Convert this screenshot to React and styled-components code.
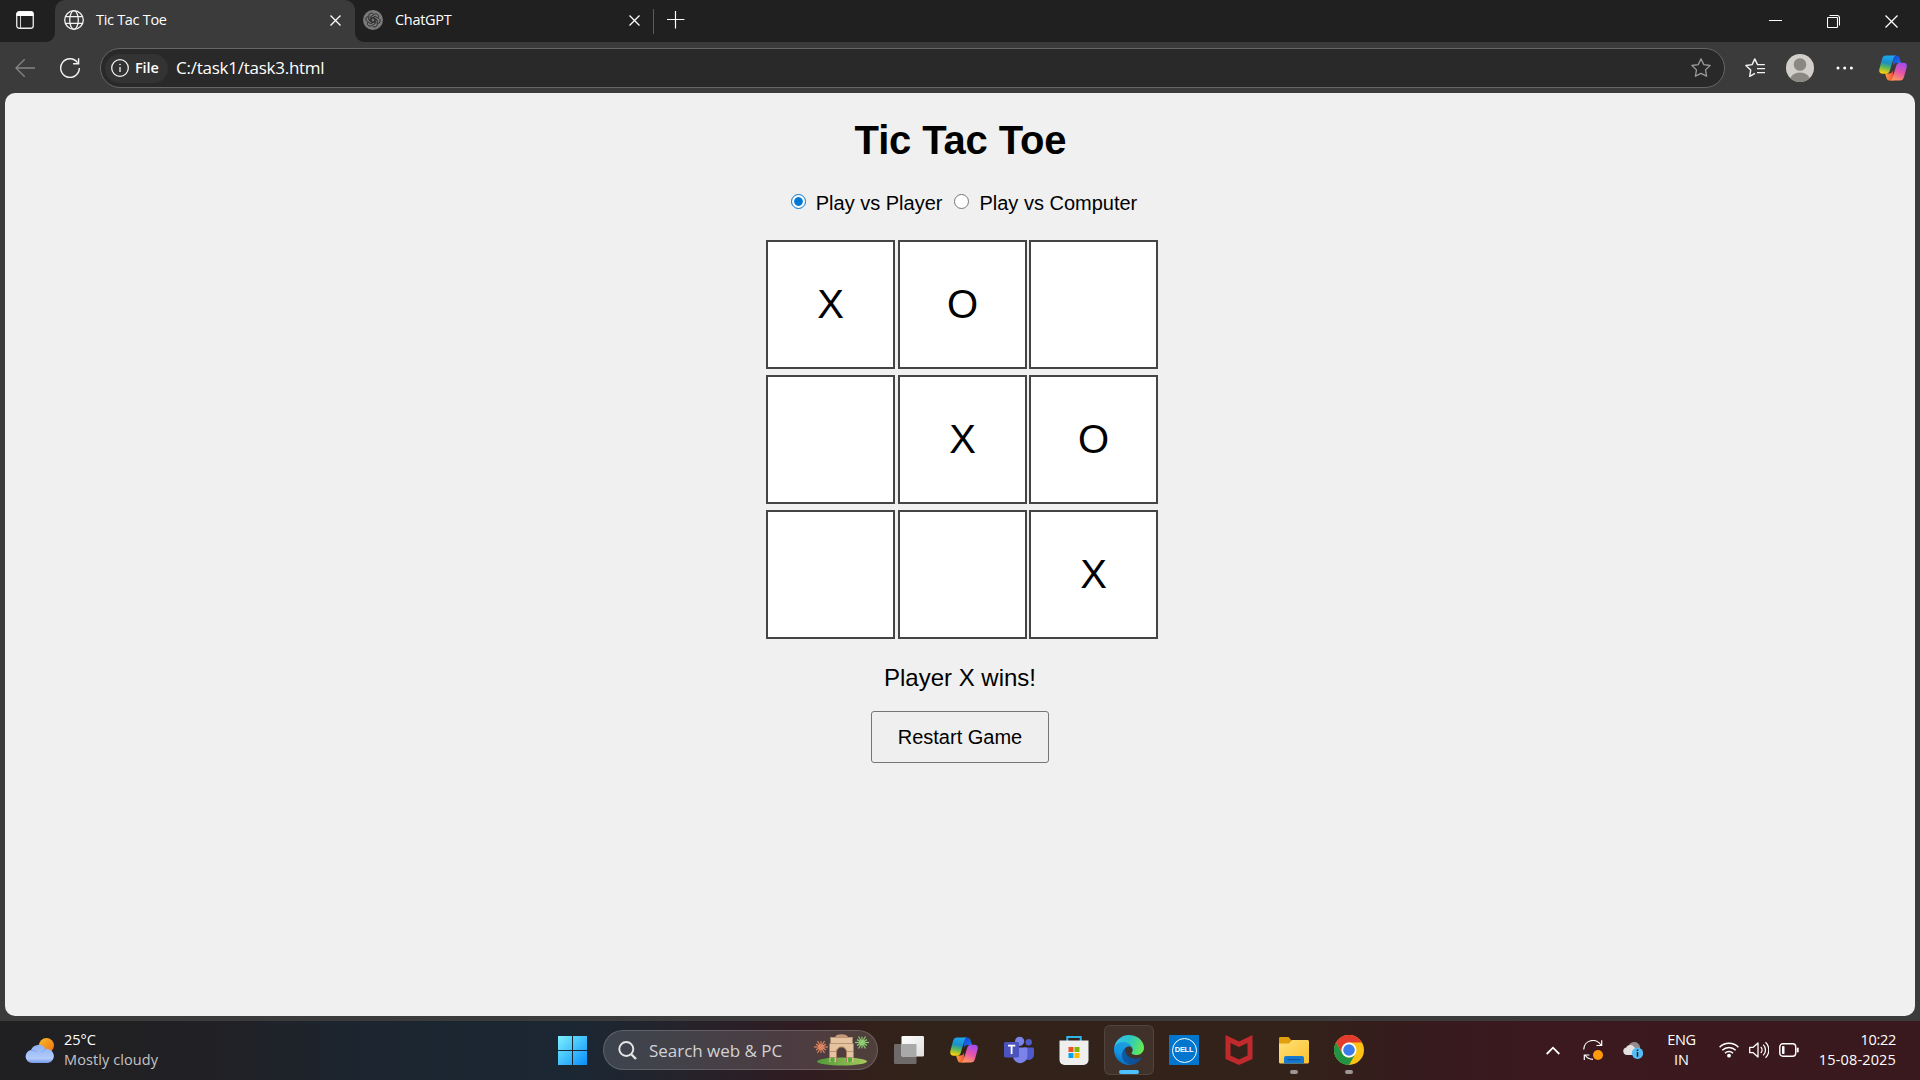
import React from "react";
import styled, { createGlobalStyle } from "styled-components";

const ui = `"Open Sans", "Noto Sans", sans-serif`;

const Global = createGlobalStyle`
  * { box-sizing: border-box; }
  html, body { margin: 0; padding: 0; background: #3b3b3b; }
  body { width: 1920px; height: 1080px; overflow: hidden; }
  svg { display: block; flex: none; }
`;

const Screen = styled.div`
  width: 1920px;
  height: 1080px;
  display: flex;
  flex-direction: column;
  background: #3b3b3b;
  font-family: ${ui};
`;

/* ---------- tab strip ---------- */
const TabStrip = styled.div`
  height: 43px;
  display: flex;
  background: #3b3b3b;
`;
const StripStart = styled.div`
  width: 55px;
  height: 42px;
  padding: 11px 0 0 16px;
  background: #202020;
  border-bottom-right-radius: 9px;
`;
const TabBack = styled.div`
  width: 300px;
  background: linear-gradient(#202020 20px, #3b3b3b 20px);
`;
const ActiveTab = styled.div`
  height: 43px;
  padding: 0 14px 3px 9px;
  display: flex;
  align-items: center;
  background: #3b3b3b;
  border-radius: 10px 10px 0 0;
`;
const StripRest = styled.div`
  flex: 1;
  height: 42px;
  display: flex;
  background: #202020;
  border-bottom-left-radius: 9px;
`;
const IdleTab = styled.div`
  width: 298px;
  height: 40px;
  padding: 0 13px 0 8px;
  display: flex;
  align-items: center;
`;
const TabTitle = styled.span`
  flex: 1;
  margin-left: 12px;
  color: #fff;
  font-size: 14.5px;
  line-height: 20px;
  letter-spacing: -0.3px;
  white-space: nowrap;
`;
const TabClose = styled.div`
  padding-top: 1px;
`;
const TabDivider = styled.div`
  width: 1px;
  height: 25px;
  margin-top: 9px;
  background: #5c5c5c;
`;
const NewTab = styled.div`
  flex: 1;
  padding: 11px 0 0 13px;
`;
const WindowButtons = styled.div`
  display: flex;
  gap: 45px;
  padding: 15px 22px 0 0;
`;

/* ---------- toolbar ---------- */
const Toolbar = styled.div`
  height: 50px;
  padding: 5px 13px 5px 15px;
  display: flex;
  align-items: center;
`;
const NavButtons = styled.div`
  width: 85px;
  display: flex;
  gap: 25px;
`;
const AddressBar = styled.div`
  width: 1625px;
  height: 40px;
  padding: 0 13px 0 4px;
  display: flex;
  align-items: center;
  border: 1px solid #666;
  border-radius: 20px;
  background: #292929;
`;
const SchemeChip = styled.div`
  width: 63px;
  height: 29px;
  padding: 0 0 1px 6px;
  display: flex;
  align-items: center;
  gap: 6px;
  border-radius: 15px;
  background: #333;
  color: #fff;
  font-size: 14.5px;
  font-weight: 600;
  letter-spacing: -0.1px;
`;
const Url = styled.span`
  flex: 1;
  margin: 0 0 1px 8px;
  color: #fff;
  font-size: 17px;
  line-height: 24px;
  letter-spacing: -0.25px;
`;
const ToolbarEnd = styled.div`
  flex: 1;
  padding-left: 20px;
  display: flex;
  align-items: center;
`;
const Gap = styled.div`
  width: ${(p) => p.$w}px;
  flex: none;
`;

/* ---------- page ---------- */
const Viewport = styled.div`
  height: 928px;
  padding: 0 5px 5px;
`;
const Page = styled.main`
  height: 923px;
  display: flex;
  flex-direction: column;
  align-items: center;
  background: #f0f0f0;
  border-radius: 10px;
  font-family: "Liberation Sans", Arial, sans-serif;
  color: #000;
`;
const Heading = styled.h1`
  margin: 24px 0 0 1px;
  font-size: 40px;
  line-height: 46px;
  font-weight: 700;
  letter-spacing: -0.14px;
`;
const Modes = styled.div`
  margin: 28px 0 0 7px;
  display: flex;
  align-items: center;
  font-size: 20px;
  line-height: 24px;
`;
const ModeLabel = styled.label`
  display: flex;
  margin-right: ${(p) => p.$after || 0}px;
`;
const Radio = styled.span`
  width: 15px;
  height: 15px;
  margin: 3px 10px 0 1px;
  flex: none;
  border: 1px solid ${(p) => (p.$on ? "#0078d7" : "#767676")};
  border-radius: 50%;
  background: ${(p) => (p.$on ? "#0078d7" : "#fff")};
  background-clip: ${(p) => (p.$on ? "content-box" : "border-box")};
  padding: ${(p) => (p.$on ? 2 : 0)}px;
  box-shadow: ${(p) => (p.$on ? "inset 0 0 0 2px #fff" : "none")};
`;
const Board = styled.div`
  margin: 25px 0 0 4px;
  display: grid;
  grid-template-columns: 132px 131px 129px;
  row-gap: 6px;
`;
const Cell = styled.div`
  width: 129px;
  height: 129px;
  padding-bottom: 2px;
  display: flex;
  align-items: center;
  justify-content: center;
  border: 2px solid #444;
  background: #fff;
  font-size: 40px;
  line-height: 46px;
`;
const Status = styled.p`
  margin: 25px 0 0;
  font-size: 24px;
  line-height: 28px;
`;
const Restart = styled.button`
  width: 178px;
  height: 52px;
  margin-top: 19px;
  padding: 1px 0 0;
  border: 1px solid #767676;
  border-radius: 3px;
  background: #efefef;
  color: #000;
  font: 20px "Liberation Sans", Arial, sans-serif;
`;

/* ---------- taskbar ---------- */
const Taskbar = styled.footer`
  height: 59px;
  display: flex;
  background: linear-gradient(90deg, #202022 0, #212125 220px, #1c2530 360px, #1b2733 580px, #25232b 680px, #301c22 800px, #33201c 860px, #32231a 920px, #32221a 1300px, #361b1d 1410px, #3b191f 1530px, #3a191e 1920px);
`;
const Weather = styled.div`
  width: 558px;
  padding: 9px 0 0 25px;
  display: flex;
`;
const TwoLines = styled.div`
  display: flex;
  flex-direction: column;
  align-items: ${(p) => p.$align || "flex-start"};
  color: #fff;
  font-size: 14.5px;
  line-height: 20px;
  white-space: nowrap;
`;
const Line = styled.span`
  letter-spacing: ${(p) => p.$track || 0}px;
  color: ${(p) => (p.$dim ? "#c4c4c6" : "#fff")};
`;
const SearchBox = styled.div`
  width: 275px;
  height: 40px;
  margin: 9px 0 0 16px;
  padding: 0 7px 0 14px;
  display: flex;
  align-items: center;
  border: 1px solid rgba(255, 255, 255, 0.16);
  border-radius: 20px;
  background: rgba(255, 255, 255, 0.14);
`;
const SearchText = styled.span`
  flex: 1;
  margin-left: 12px;
  color: #d2d2d4;
  font-size: 17px;
  letter-spacing: -0.02px;
  white-space: nowrap;
`;
const Apps = styled.div`
  margin-left: 6px;
  padding-top: 4px;
  display: flex;
  gap: 5px;
`;
const AppSlot = styled.div`
  width: 50px;
  height: 50px;
  display: flex;
  flex-direction: column;
  align-items: center;
  padding-top: 9px;
  border: 1px solid ${(p) => (p.$active ? "rgba(255,255,255,0.09)" : "transparent")};
  border-radius: 6px;
  background: ${(p) => (p.$active ? "rgba(255,255,255,0.07)" : "transparent")};
`;
const Running = styled.div`
  width: ${(p) => (p.$active ? 20 : 8)}px;
  height: 4px;
  margin-top: 5px;
  border-radius: 2px;
  background: ${(p) => (p.$active ? "#4cc2ff" : "#9d9694")};
`;
const Tray = styled.div`
  flex: 1;
  padding: 9px 24px 0 0;
  display: flex;
  justify-content: flex-end;
`;
const TrayIcon = styled.div`
  height: 40px;
  display: flex;
  align-items: center;
  margin-right: ${(p) => p.$after}px;
`;
const IconPad = styled.div`
  padding-top: ${(p) => p.$top || 0}px;
`;

/* ---------- icons ---------- */
const Cross = ({ size = 11, color = "#fff", w = 1.3 }) => (
  <svg width={size} height={size} viewBox={`0 0 ${size} ${size}`} stroke={color} strokeWidth={w}>
    <path d={`M.5 .5 ${size - 0.5} ${size - 0.5}M${size - 0.5} .5 .5 ${size - 0.5}`} />
  </svg>
);
const TabActions = () => (
  <svg width="18" height="18" viewBox="0 0 18 18">
    <rect x=".75" y=".75" width="16.5" height="16.5" rx="2.5" fill="none" stroke="#eee" strokeWidth="1.3" />
    <path d="M.5 5V3A2.5 2.5 0 0 1 3 .5h12A2.5 2.5 0 0 1 17.500 3v2z" fill="#fff" />
    <path d="M4.500 5v12" stroke="#ccc" strokeWidth="1.1" />
  </svg>
);
const Globe = () => (
  <svg width="20" height="20" viewBox="0 0 20 20" fill="none" stroke="#f2f2f2" strokeWidth="1.3">
    <circle cx="10" cy="10" r="9.300" />
    <ellipse cx="10" cy="10" rx="4.300" ry="9.300" />
    <path d="M1.500 6.700h17M1.500 13.300h17" />
  </svg>
);
const ChatIcon = () => (
  <svg width="20" height="20" viewBox="0 0 20 20">
    <circle cx="10" cy="10" r="10" fill="#7a7a7a" />
    <g fill="none" stroke="#262626" strokeWidth=".85" strokeLinejoin="round">
      {[0, 60, 120, 180, 240, 300].map((a) => (
        <path key={a} transform={`rotate(${a} 10 10)`} d="M8 11.100V6.300l3.600-2.100a2.700 2.700 0 0 1 3.900 3.200M8 8.800l4-2.300" />
      ))}
    </g>
  </svg>
);
const Plus = () => (
  <svg width="18" height="18" viewBox="0 0 18 18" stroke="#fff" strokeWidth="1.200"><path d="M8.500 0v17.500M0 8.500h17.400" /></svg>
);
const Minimise = () => (
  <svg width="13" height="13" viewBox="0 0 13 13" stroke="#fff"><path d="M0 5.500h13" /></svg>
);
const RestoreWin = () => (
  <svg width="13" height="13" viewBox="0 0 13 13" fill="none" stroke="#fff" strokeWidth="1.100">
    <rect x=".5" y="2.500" width="10" height="10" rx=".8" />
    <path d="M2.500 .5h7.500a2.500 2.500 0 0 1 2.500 2.500v7.500" />
  </svg>
);
const Back = () => (
  <svg width="20" height="20" viewBox="0 0 20 20" fill="none" stroke="#858585" strokeWidth="1.300"><path d="M20 10H1M9.700 1.300 1 10l8.700 8.700" /></svg>
);
const Reload = () => (
  <svg width="20" height="20" viewBox="0 0 20 20" fill="none" stroke="#f4f4f4" strokeWidth="1.400">
    <path d="M17.500 4.600A9.300 9.300 0 1 0 19.300 10M18.600.2v5.500h-5.500" />
  </svg>
);
const Info = () => (
  <svg width="18" height="18" viewBox="0 0 18 18" fill="none" stroke="#f4f4f4" strokeWidth="1.300">
    <circle cx="9" cy="9" r="8.300" /><path d="M9 8v5" /><circle cx="9" cy="5.600" r=".5" fill="#fff" strokeWidth=".6" />
  </svg>
);
const Star = () => (
  <svg width="20" height="20" viewBox="0 0 20 20" fill="none" stroke="#9a9a9a" strokeWidth="1.300" strokeLinejoin="round">
    <path d="m10 .9 2.800 5.700 6.300.9-4.600 4.400 1.100 6.300L10 15.300l-5.600 2.900 1.100-6.300L.9 7.500l6.300-.9z" />
  </svg>
);
const Favourites = () => (
  <svg width="20" height="20" viewBox="0 0 20 20" fill="none" stroke="#f4f4f4" strokeWidth="1.400" strokeLinejoin="round">
    <path d="M10 15.400 4.700 18.300l1-6.200L.9 7.500l6.200-.9L9.800.9l2.700 5.700h7.300M12 10.600h8M12 14.600h8" />
  </svg>
);
const Avatar = () => (
  <svg width="28" height="28" viewBox="0 0 28 28">
    <defs><clipPath id="av"><circle cx="14" cy="14" r="14" /></clipPath></defs>
    <g clipPath="url(#av)">
      <rect width="28" height="28" fill="#d2cfcb" />
      <circle cx="14" cy="10.500" r="6.300" fill="#8b8783" />
      <ellipse cx="14" cy="26" rx="10" ry="7.500" fill="#8b8783" />
    </g>
  </svg>
);
const Dots = () => (
  <svg width="18" height="4" viewBox="0 0 18 4" fill="#fff"><circle cx="2" cy="2" r="1.500" /><circle cx="8.700" cy="2" r="1.500" /><circle cx="15.400" cy="2" r="1.500" /></svg>
);
const Copilot = ({ id }) => (
  <svg width="28" height="26" viewBox="0 0 28 26">
    <defs>
      <linearGradient id={id + "a"} x1=".5" y1="0" x2=".3" y2="1">
        <stop offset="0" stopColor="#1ea7f0" /><stop offset=".4" stopColor="#1b8fc6" /><stop offset=".65" stopColor="#5bb85a" /><stop offset=".95" stopColor="#f3cf0d" />
      </linearGradient>
      <linearGradient id={id + "b"} x1=".7" y1="0" x2=".3" y2="1">
        <stop offset="0" stopColor="#a14cf0" /><stop offset=".5" stopColor="#e754a8" /><stop offset="1" stopColor="#ff9a5c" />
      </linearGradient>
      <linearGradient id={id + "c"} x1="0" y1="0" x2="1" y2="1"><stop offset="0" stopColor="#1a3fd0" /><stop offset="1" stopColor="#1d7bef" /></linearGradient>
      <linearGradient id={id + "d"}><stop offset="0" stopColor="#f9a23b" /><stop offset="1" stopColor="#ee4a3f" /></linearGradient>
    </defs>
    <path d="M13 .5h4c2 0 3 1 3.500 2.600L22 8h-4c-2 0-3 .5-3.700 2.300z" fill={`url(#${id}c)`} />
    <path d="M15 25.500h-4c-2 0-3-1-3.500-2.600L6 18.500h4c2 0 3-.5 3.700-2.700z" fill={`url(#${id}d)`} />
    <path d="M7 .5h10c-1.500.3-2.200 1.500-2.700 3.200L11 15c-.7 2.500-2 3.700-4 3.700H3.500C.8 18.700-.3 16.800.4 14L3 4C3.700 1.600 5 .5 7 .5z" fill={`url(#${id}a)`} />
    <path d="M21 25.500H11c1.500-.3 2.200-1.500 2.700-3.200L17 11.500C17.700 9 19 7.800 21 7.800h3.500c2.700 0 3.800 1.900 3.100 4.700L25 22c-.7 2.400-2 3.500-4 3.500z" fill={`url(#${id}b)`} />
  </svg>
);
const WeatherIcon = () => (
  <svg width="30" height="26" viewBox="0 0 30 26">
    <defs>
      <linearGradient id="sun" x1="0" y1="0" x2="1" y2="1"><stop offset="0" stopColor="#f8bd2c" /><stop offset="1" stopColor="#f26d0c" /></linearGradient>
      <linearGradient id="cl" x1="0" y1="0" x2="0" y2="1"><stop offset="0" stopColor="#8fb2f4" /><stop offset=".75" stopColor="#b2cbfa" /><stop offset="1" stopColor="#7396e6" /></linearGradient>
    </defs>
    <circle cx="21.500" cy="8.500" r="7.500" fill="url(#sun)" />
    <path d="M7 26a6.500 6.500 0 0 1-1-12.900A8 8 0 0 1 20.500 12 7 7 0 1 1 23 26z" fill="url(#cl)" />
    <path d="M6 13.500c3-.5 5 .2 6.500 2M17 15.500c1-2 2-3 4-3.500" fill="none" stroke="#6f94e8" strokeWidth="1" opacity=".6" />
  </svg>
);
const WindowsLogo = () => (
  <svg width="29" height="29" viewBox="0 0 29 29">
    <defs><linearGradient id="win" gradientUnits="userSpaceOnUse" x1="0" y1="0" x2="29" y2="29"><stop offset="0" stopColor="#7df0ff" /><stop offset=".5" stopColor="#41c0fc" /><stop offset="1" stopColor="#0a8dfa" /></linearGradient></defs>
    <path d="M0 0h14v14H0zM15 0h14v14H15zM0 15h14v14H0zM15 15h14v14H15z" fill="url(#win)" />
  </svg>
);
const Magnifier = () => (
  <svg width="19" height="19" viewBox="0 0 19 19" fill="none" stroke="#e6e6e6" strokeWidth="1.900"><circle cx="8.300" cy="8" r="7" /><path d="m13 13 5 5" strokeWidth="2.400" /></svg>
);
const Burst = ({ x, y, r, color }) => (
  <g stroke={color} strokeWidth="1.200">
    {[...Array(12)].map((_, i) => {
      const a = (i * Math.PI) / 6;
      const l = i % 2 ? r * 0.82 : r;
      return <path key={i} d={`M${x} ${y}L${x + Math.cos(a) * l} ${y + Math.sin(a) * l}`} />;
    })}
    <circle cx={x} cy={y} r={r * 0.4} fill={color} stroke="none" />
  </g>
);
const Gate = () => (
  <svg width="56" height="32" viewBox="0 0 56 32">
    <defs><linearGradient id="grass"><stop offset="0" stopColor="#4f9a3a" /><stop offset="1" stopColor="#a8c85c" /></linearGradient></defs>
    <ellipse cx="28" cy="27.500" rx="25" ry="4" fill="url(#grass)" />
    <path d="M21 3c1-2 3.500-2.700 6.500-2.700S33 1 34 3z" fill="#c49a78" />
    <path d="M16.500 3h22v6l1 1.500V28h-7V18a5 5 0 0 0-10 0v10h-7V10.500l1-1.500z" fill="#e6c3a0" />
    <path d="M16 3.500h23M15.500 9.500h24M16 17.500h6M33 17.500h6M16 23.500h6M33 23.500h6" stroke="#bd9473" strokeWidth="1" />
    <path d="M22.500 28V18a5 5 0 0 1 10 0v10" fill="none" stroke="#a87c5d" />
    <circle cx="18.500" cy="26" r="2.400" fill="#4fae36" /><circle cx="36" cy="26" r="2.400" fill="#4fae36" />
    <Burst x={7} y={13} r={7} color="#dc8460" />
    <Burst x={48} y={8.500} r={7} color="#8dcc72" />
  </svg>
);
const TaskView = () => (
  <svg width="30" height="30" viewBox="0 0 30 30">
    <defs><linearGradient id="tv" x1="0" y1="0" x2="1" y2="1"><stop offset="0" stopColor="#fff" /><stop offset="1" stopColor="#dedede" /></linearGradient></defs>
    <rect x="0" y="9" width="22.500" height="20" rx="1.300" fill="#6d6a69" />
    <rect x="7.500" y="1" width="22.500" height="20.500" rx="1.300" fill="url(#tv)" />
    <rect x="7.500" y="9" width="15" height="12.500" fill="#a9a9a9" />
  </svg>
);
const Teams = () => (
  <svg width="30" height="30" viewBox="0 0 30 30">
    <circle cx="24.700" cy="7.300" r="3.200" fill="#5059c9" />
    <path d="M20 12.500h8.500c.8 0 1.500.6 1.500 1.500v5.500a5.500 5.500 0 0 1-9 4.200z" fill="#5059c9" />
    <circle cx="15.600" cy="6.300" r="4.600" fill="#7b83eb" />
    <path d="M9 12.500h13c.8 0 1.400.6 1.400 1.400V21a7 7 0 0 1-14.400 0z" fill="#7b83eb" />
    <rect x="0" y="7" width="15" height="15.500" rx="1.400" fill="#4b53bc" />
    <path d="M4 10.700h7.300M7.600 10.700v8.300" stroke="#fff" strokeWidth="1.800" />
  </svg>
);
const Store = () => (
  <svg width="30" height="30" viewBox="0 0 30 30">
    <path d="M8.300 6.500V2h13.400v4.500" fill="none" stroke="#31b4e6" strokeWidth="2" />
    <path d="M.5 5.500h29V25a5 5 0 0 1-5 5h-19a5 5 0 0 1-5-5z" fill="#efefef" />
    <path d="M9.500 12h5v5h-5z" fill="#f25022" /><path d="M15.500 12h5v5h-5z" fill="#7fba00" />
    <path d="M9.500 18h5v5h-5z" fill="#00a4ef" /><path d="M15.500 18h5v5h-5z" fill="#ffb900" />
  </svg>
);
const Edge = () => (
  <svg width="30" height="30" viewBox="0 0 256 256">
    <defs>
      <linearGradient id="eA" x1=".2" y1=".5" x2="1" y2=".5"><stop offset="0" stopColor="#0c59a4" /><stop offset="1" stopColor="#114a8b" /></linearGradient>
      <linearGradient id="eB" x1=".6" y1=".1" x2=".3" y2="1"><stop offset="0" stopColor="#1b9de2" /><stop offset=".5" stopColor="#1595df" /><stop offset="1" stopColor="#0667c0" /></linearGradient>
      <linearGradient id="eC" x1="0" y1=".3" x2="1" y2=".6"><stop offset="0" stopColor="#35c1f1" /><stop offset=".45" stopColor="#2cc6c5" /><stop offset="1" stopColor="#66eb4f" /></linearGradient>
    </defs>
    <path fill="url(#eA)" d="M231 190.500a94 94 0 0 1-10.500 4.700 102 102 0 0 1-36 6.500c-47.400 0-88.800-32.600-88.800-74.500A31.600 31.600 0 0 1 112.200 99.700c-43 1.800-54 46.600-54 72.700 0 74.100 68.300 81.600 83 81.600 7.900 0 19.800-2.300 27-4.600l1.300-.4a128.300 128.300 0 0 0 66.600-52.700 4 4 0 0 0-5.100-5.800z" />
    <path fill="url(#eB)" d="M105.700 241.400A79.200 79.200 0 0 1 83 220.100a80.700 80.700 0 0 1 29.200-120.500c3.200-1.500 8.500-4.100 15.600-4a32.400 32.400 0 0 1 25.700 13 31.900 31.900 0 0 1 6.300 18.700c0-.2 24.500-79.600-80-79.600C35.900 47.700 0 89.400 0 125.900a130 130 0 0 0 12.100 56 128 128 0 0 0 156.400 67 75.500 75.500 0 0 1-62.800-7.500z" />
    <path fill="url(#eC)" d="M152.300 148.900c-.9 1-3.400 2.500-3.400 5.600 0 2.600 1.700 5.200 4.800 7.300 14.300 10 41.400 8.600 41.500 8.600a59.600 59.600 0 0 0 30.300-8.300A61.400 61.400 0 0 0 256 109.200c.3-22.400-8-37.300-11.300-43.900C223.500 23.900 177.700 0 128 0A128 128 0 0 0 0 126.200c.5-36.500 36.800-66 80-66 3.500 0 23.500.3 42 10a72.600 72.600 0 0 1 30.900 29.300c6.100 10.600 7.200 24.100 7.200 29.500 0 5.300-2.700 13.300-7.800 19.900z" />
  </svg>
);
const DellTile = styled.div`
  width: 30px;
  height: 30px;
  display: flex;
  align-items: center;
  justify-content: center;
  background: #0076ce;
`;
const DellRing = styled.div`
  width: 25px;
  height: 25px;
  display: flex;
  align-items: center;
  justify-content: center;
  border: 1.5px solid #fff;
  border-radius: 50%;
  color: #fff;
  font: 700 7.5px/8px "Liberation Sans", Arial, sans-serif;
  letter-spacing: -0.3px;
`;
const McAfee = () => (
  <svg width="30" height="30" viewBox="0 0 30 30"><path fillRule="evenodd" d="M1.500 0 15 6.500 28.500 0v24L15 30 1.500 24zM6.500 8v12.600l8.500 3.800 8.500-3.800V8L15 12z" fill="#c02a2c" /></svg>
);
const Folder = () => (
  <svg width="30" height="30" viewBox="0 0 30 30">
    <defs><linearGradient id="fo" x1="0" y1="0" x2="1" y2="1"><stop offset="0" stopColor="#ffe07a" /><stop offset="1" stopColor="#fcc12d" /></linearGradient></defs>
    <path d="M0 10V3.500C0 2.700.6 2 1.500 2h8l3 3.500H28V10z" fill="#dfa00b" />
    <path d="M0 8.500h10L13 5h15.500c.8 0 1.500.7 1.500 1.500V27c0 .8-.7 1.500-1.500 1.500h-27A1.500 1.500 0 0 1 0 27z" fill="url(#fo)" />
    <path d="M5 28.500V23a2 2 0 0 1 2-2h16a2 2 0 0 1 2 2v5.500z" fill="#1479cf" /><path d="M8.500 24.700h13" stroke="#0c4f9a" />
  </svg>
);
const Chrome = () => (
  <svg width="30" height="30" viewBox="0 0 48 48">
    <circle cx="24" cy="24" r="24" fill="#fbc116" />
    <path d="M3.200 12A24 24 0 0 1 44.800 12H24a12 12 0 0 0-10.400 18z" fill="#e33b2e" />
    <path d="M3.200 12A24 24 0 0 0 24 48l10.400-18A12 12 0 0 1 13.600 30z" fill="#229342" />
    <circle cx="24" cy="24" r="12" fill="#fff" /><circle cx="24" cy="24" r="9.300" fill="#3a7de8" />
  </svg>
);
const ChevronUp = () => (
  <svg width="14" height="9" viewBox="0 0 14 9" fill="none" stroke="#fff" strokeWidth="1.800"><path d="m.7 8 6.300-6.300L13.300 8" /></svg>
);
const Sync = () => (
  <svg width="20" height="20" viewBox="0 0 20 20" fill="none" stroke="#fff" strokeWidth="1.200">
    <path d="M.7 9.500A9.200 9.200 0 0 1 18 5.300M18.700.3v5.200h-5.200M1.300 20v-5h5.200M2 15a9.500 9.500 0 0 0 8 4.300" />
    <circle cx="15" cy="15" r="5" fill="#ff9a0a" stroke="none" />
  </svg>
);
const CloudInfo = () => (
  <svg width="20" height="18" viewBox="0 0 20 18">
    <path d="M6 12C4 6 6 1 11 1c3.500 0 5.500 2 6 5v6z" fill="#948b8d" />
    <path d="M4 14a3.800 3.800 0 0 1-.8-7.500C5 3.500 9 3.300 11 6l4 3v5z" fill="#e4e0e1" />
    <circle cx="14.500" cy="12.300" r="5.700" fill="#53bdf4" />
    <path d="M14.500 11v4.800M14.500 8.500v1.500" stroke="#10202b" strokeWidth="1.500" />
  </svg>
);
const Wifi = () => (
  <svg width="20" height="16" viewBox="0 0 20 16" fill="none" stroke="#fff" strokeWidth="1.500">
    <path d="M.6 5.200a13.300 13.300 0 0 1 18.800 0M3.300 8.200a9.500 9.500 0 0 1 13.400 0M6 11.200a5.700 5.700 0 0 1 8 0" />
    <circle cx="10" cy="13.700" r="1.900" fill="#fff" stroke="none" />
  </svg>
);
const Volume = () => (
  <svg width="20" height="18" viewBox="0 0 20 18" fill="none" stroke="#fff" strokeWidth="1.300" strokeLinejoin="round">
    <path d="M.7 6.300h3.500L9 2v14l-4.800-4.300H.7zM11.800 6a4.300 4.300 0 0 1 0 6M14.200 3.600a7.500 7.500 0 0 1 0 10.800M16.500 1.300a10.600 10.600 0 0 1 0 15.400" />
  </svg>
);
const Battery = () => (
  <svg width="20" height="14" viewBox="0 0 20 14" fill="none" stroke="#fff" strokeWidth="1.400">
    <rect x=".8" y=".8" width="15.900" height="12.400" rx="3" /><path d="M18.700 4.700v4.600" strokeWidth="2" /><rect x="3" y="3" width="2.500" height="8" rx=".8" fill="#fff" stroke="none" />
  </svg>
);

const cells = ["X", "O", "", "", "X", "O", "", "", "X"];
const apps = [
  { name: "taskview", icon: <TaskView /> },
  { name: "copilot", icon: <Copilot id="tb" />, pad: 2 },
  { name: "teams", icon: <Teams /> },
  { name: "store", icon: <Store /> },
  { name: "edge", icon: <Edge />, active: true, running: true },
  { name: "dell", icon: <DellTile><DellRing>DELL</DellRing></DellTile> },
  { name: "mcafee", icon: <McAfee /> },
  { name: "folder", icon: <Folder />, running: true },
  { name: "chrome", icon: <Chrome />, running: true },
];

export default function App() {
  return (
    <Screen>
      <Global />
      <TabStrip>
        <StripStart><TabActions /></StripStart>
        <TabBack>
          <ActiveTab>
            <Globe />
            <TabTitle>Tic Tac Toe</TabTitle>
            <TabClose><Cross /></TabClose>
          </ActiveTab>
        </TabBack>
        <StripRest>
          <IdleTab>
            <ChatIcon />
            <TabTitle>ChatGPT</TabTitle>
            <TabClose><Cross /></TabClose>
          </IdleTab>
          <TabDivider />
          <NewTab><Plus /></NewTab>
          <WindowButtons><Minimise /><RestoreWin /><Cross size={13} /></WindowButtons>
        </StripRest>
      </TabStrip>
      <Toolbar>
        <NavButtons><Back /><Reload /></NavButtons>
        <AddressBar>
          <SchemeChip><Info /><span>File</span></SchemeChip>
          <Url>C:/task1/task3.html</Url>
          <Star />
        </AddressBar>
        <ToolbarEnd>
          <Favourites /><Gap $w={21} /><Avatar /><Gap $w={22} /><Dots /><Gap $w={25} /><Copilot id="tp" />
        </ToolbarEnd>
      </Toolbar>
      <Viewport>
        <Page>
          <Heading>Tic Tac Toe</Heading>
          <Modes>
            <ModeLabel $after={11}><Radio $on /><span>Play vs Player</span></ModeLabel>
            <ModeLabel><Radio /><span>Play vs Computer</span></ModeLabel>
          </Modes>
          <Board>{cells.map((c, i) => <Cell key={i}>{c}</Cell>)}</Board>
          <Status>Player X wins!</Status>
          <Restart>Restart Game</Restart>
        </Page>
      </Viewport>
      <Taskbar>
        <Weather>
          <IconPad $top={7}><WeatherIcon /></IconPad>
          <Gap $w={9} />
          <TwoLines><Line>25°C</Line><Line $dim $track={0.1}>Mostly cloudy</Line></TwoLines>
        </Weather>
        <IconPad $top={15}><WindowsLogo /></IconPad>
        <SearchBox><Magnifier /><SearchText>Search web &amp; PC</SearchText><Gate /></SearchBox>
        <Apps>
          {apps.map((a) => (
            <AppSlot key={a.name} $active={a.active}>
              <IconPad $top={a.pad}>{a.icon}</IconPad>
              {a.running && <Running $active={a.active} />}
            </AppSlot>
          ))}
        </Apps>
        <Tray>
          <TrayIcon $after={23}><ChevronUp /></TrayIcon>
          <TrayIcon $after={20}><Sync /></TrayIcon>
          <TrayIcon $after={24}><CloudInfo /></TrayIcon>
          <TwoLines $align="center"><Line $track={-0.3}>ENG</Line><Line>IN</Line></TwoLines>
          <Gap $w={23} />
          <TrayIcon $after={10}><Wifi /></TrayIcon>
          <TrayIcon $after={10}><Volume /></TrayIcon>
          <TrayIcon $after={20}><Battery /></TrayIcon>
          <TwoLines $align="flex-end"><Line $track={-0.3}>10:22</Line><Line $track={0.15}>15-08-2025</Line></TwoLines>
        </Tray>
      </Taskbar>
    </Screen>
  );
}
